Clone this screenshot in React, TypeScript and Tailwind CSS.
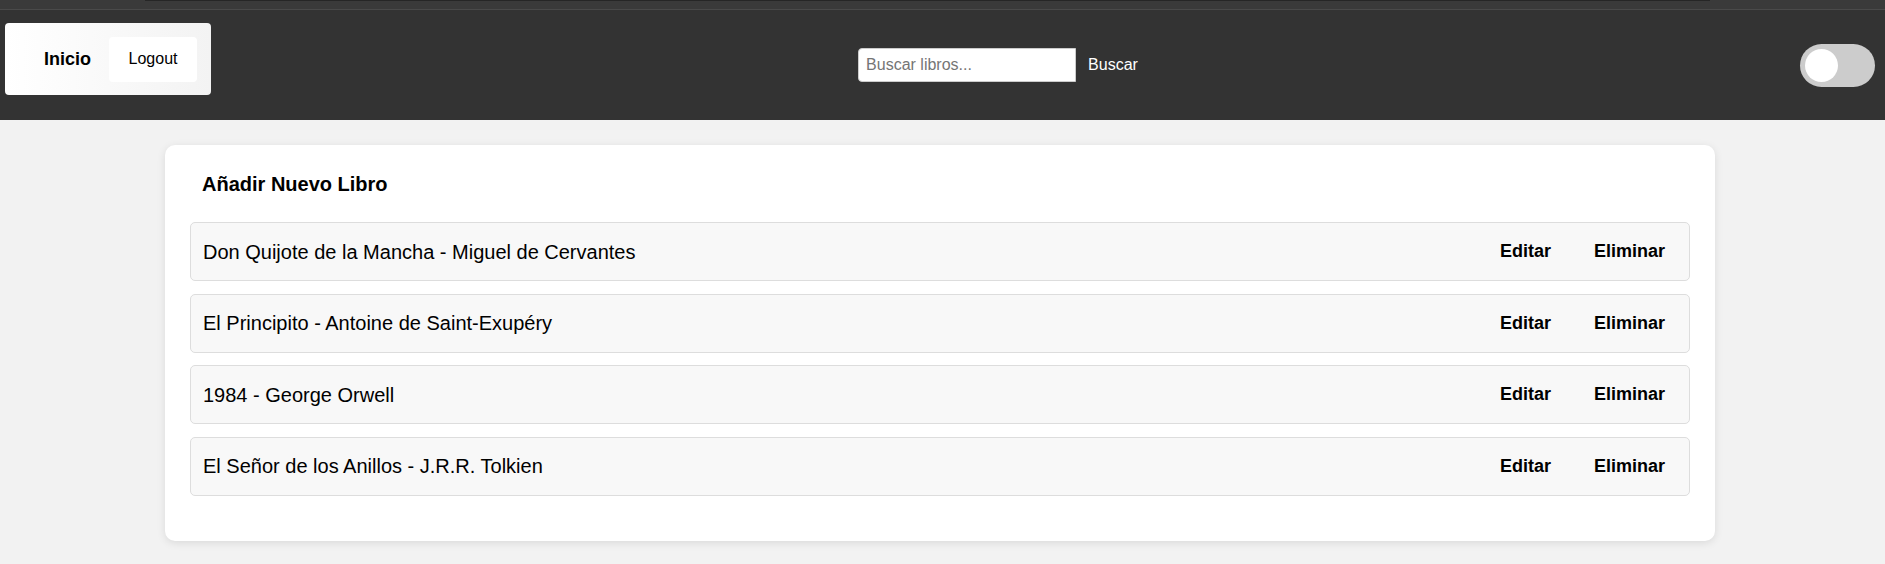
import { useState } from "react";

const books = [
  { id: 1, title: "Don Quijote de la Mancha", author: "Miguel de Cervantes" },
  { id: 2, title: "El Principito", author: "Antoine de Saint-Exupéry" },
  { id: 3, title: "1984", author: "George Orwell" },
  { id: 4, title: "El Señor de los Anillos", author: "J.R.R. Tolkien" },
];

export default function App() {
  const [dark, setDark] = useState(false);
  const [query, setQuery] = useState("");

  return (
    <div className="min-h-[564px] bg-[#f2f2f2] font-['Liberation_Sans',Arial,sans-serif] text-black">
      <div className="h-[9px] bg-[#3a3a3a]">
        <div className="ml-[145px] h-px w-[1565px] bg-[#262626]" />
      </div>
      <div className="h-px bg-[#4a4a4a]" />

      <header className="flex h-[110px] items-center justify-between bg-[#333] pl-[5px] pr-[10px]">
        <nav className="mb-3 flex h-[72px] w-[206px] items-center rounded-[4px] bg-gradient-to-r from-white to-[#f3f3f3] pl-[39px]">
          <a href="#" className="text-[18px] font-bold leading-none">
            Inicio
          </a>
          <button className="ml-[18px] h-[45px] w-[88px] rounded-[4px] bg-white text-[16px]">
            Logout
          </button>
        </nav>

        <form className="flex items-center" onSubmit={(e) => e.preventDefault()}>
          <input
            value={query}
            onChange={(e) => setQuery(e.target.value)}
            placeholder="Buscar libros..."
            className="h-[34px] w-[218px] rounded-l-[4px] border border-[#ccc] bg-white px-[7px] text-[16px] text-black outline-none placeholder:text-[#757575]"
          />
          <button type="submit" className="ml-[2px] pl-[10px] pr-[15px] text-[16px] text-white">
            Buscar
          </button>
        </form>

        <button
          onClick={() => setDark(!dark)}
          className="flex h-[43px] w-[75px] items-center rounded-full bg-[#ccc] px-[5px]"
        >
          <span className={"block h-[33px] w-[33px] rounded-full bg-white " + (dark ? "ml-auto" : "")} />
        </button>
      </header>

      <main className="pt-[25px] pb-[24px]">
        <section className="ml-[165px] w-[1550px] rounded-[10px] bg-white px-[25px] pt-[28px] pb-[45px] shadow-[0_2px_8px_rgba(0,0,0,0.1)]">
          <h2 className="mb-[26px] pl-[12px] text-[20px] font-bold leading-[23px]">Añadir Nuevo Libro</h2>
          <ul className="flex flex-col gap-[12.5px]">
            {books.map((book) => (
              <li
                key={book.id}
                className="flex h-[59px] items-center justify-between rounded-[5px] border border-[#ddd] bg-[#f8f8f8] pl-[12px] pr-[12px]"
              >
                <span className="text-[20px]">
                  {book.title} - {book.author}
                </span>
                <div className="flex items-center">
                  <button className="px-[12px] text-[18px] font-bold">Editar</button>
                  <button className="ml-[19px] px-[12px] text-[18px] font-bold">Eliminar</button>
                </div>
              </li>
            ))}
          </ul>
        </section>
      </main>
    </div>
  );
}
